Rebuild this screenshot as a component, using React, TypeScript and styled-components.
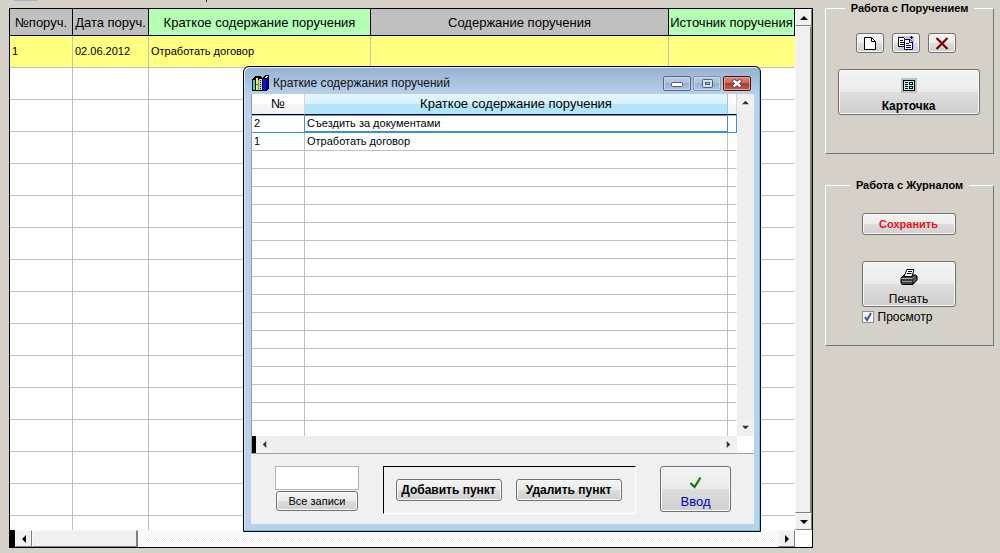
import React from 'react';
import styled, { createGlobalStyle, css } from 'styled-components';

const GlobalStyle = createGlobalStyle`
  * { box-sizing: border-box; }
  body {
    margin: 0;
    background: #d5d1c8;
    color: #000;
    font-family: "Liberation Sans", Arial, sans-serif;
    font-size: 11px;
  }
  button, input { font-family: inherit; }
`;

const Page = styled.div`
  position: relative;
  display: flex;
  gap: 12px;
  height: 100vh;
  min-height: 540px;
  padding: 0 6px 5px 9px;
  overflow: hidden;
`;

/* ---------- journal ---------- */

const JournalColumn = styled.main`
  flex: 1;
  min-width: 0;
  display: flex;
  flex-direction: column;
`;

const ToolStrip = styled.div`
  display: flex;
  gap: 168px;
  height: 8px;
  flex: none;
  padding-left: 5px;
`;

const ToolEdge = styled.div`
  width: 24px;
  height: 1px;
  background: #a3b4c8;
`;

const ToolMark = styled.div`
  width: 1px;
  height: 2px;
  background: #222;
`;

const Journal = styled.section`
  flex: 1;
  min-height: 0;
  display: flex;
  flex-direction: column;
  border: 1px solid #000;
  background: #fff;
`;

const JournalBody = styled.div`
  flex: 1;
  min-height: 0;
  display: flex;
`;

const TableClip = styled.div`
  flex: 1;
  min-width: 0;
  overflow: hidden;
`;

const JournalTable = styled.table`
  width: 100%;
  table-layout: fixed;
  border-collapse: separate;
  border-spacing: 0;
`;

const JournalHead = styled.th<{ $green?: boolean }>`
  height: 27px;
  padding: 2px 0 0;
  border-right: 1px solid #000;
  border-bottom: 1px solid #000;
  background: ${(p) => (p.$green ? '#b3ffb3' : '#c0c0c0')};
  font-size: 13px;
  font-weight: 400;
  line-height: 16px;
  text-align: center;
  white-space: nowrap;
`;

const JournalRow = styled.tr<{ $selected?: boolean }>`
  background: ${(p) => (p.$selected ? '#ffff80' : '#fff')};
`;

const JournalCell = styled.td`
  height: 32px;
  padding: 0 2px 2px;
  border-right: 1px solid #c0c0c0;
  border-bottom: 1px solid #c0c0c0;
  font-size: 11px;
  line-height: 14px;
  white-space: nowrap;
  &:last-child { border-right-color: transparent; }
`;

/* ---------- scroll bars ---------- */

const raised = css`
  border: 1px solid;
  border-color: #f8f8f8 #808080 #808080 #f8f8f8;
  background: #f0f0f0;
`;

const VScroll = styled.div`
  width: 17px;
  flex: none;
  display: flex;
  flex-direction: column;
`;

const HScroll = styled.div`
  height: 17px;
  flex: none;
  display: flex;
  background: #fff;
`;

const ScrollButton = styled.button`
  ${raised}
  width: 17px;
  height: 17px;
  flex: none;
  padding: 0;
  display: flex;
  align-items: center;
  justify-content: center;
`;

const Thumb = styled.div<{ $width?: number }>`
  ${raised}
  border-right-width: 2px;
  flex: ${(p) => (p.$width ? `0 0 ${p.$width}px` : 1)};
`;

const Track = styled.div`
  flex: 1;
  background: repeating-conic-gradient(#f1f1f1 0 25%, #fff 0 50%) 0 0 / 2px 2px;
`;

const Split = styled.div<{ $width: number }>`
  width: ${(p) => p.$width}px;
  flex: none;
  background: #000;
`;

const Corner = styled.div<{ $size: number }>`
  width: ${(p) => p.$size}px;
  flex: none;
  background: #fff;
`;

const arrowPaths = {
  up: 'M0 6L4 2L8 6Z',
  down: 'M0 2L4 6L8 2Z',
  left: 'M6 0L2 4L6 8Z',
  right: 'M2 0L6 4L2 8Z',
};

const Arrow = ({ dir, size = 8 }: { dir: keyof typeof arrowPaths; size?: number }) => (
  <svg width={size} height={size} viewBox="0 0 8 8" aria-hidden="true">
    <path d={arrowPaths[dir]} fill={size < 8 ? '#333' : '#000'} />
  </svg>
);

/* ---------- side panel ---------- */

const Side = styled.aside`
  width: 169px;
  flex: none;
  display: flex;
  flex-direction: column;
  gap: 23px;
`;

const Group = styled.fieldset<{ $height: number }>`
  min-width: 0;
  min-height: ${(p) => p.$height}px;
  margin: 0;
  padding: 0;
  border: 1px solid;
  border-color: #fff #77746e #77746e #fff;
`;

const Legend = styled.legend`
  margin: 0 auto;
  padding: 0 6px;
  font-size: 11px;
  font-weight: 700;
  line-height: 16px;
`;

const GroupBody = styled.div<{ $top: number }>`
  display: flex;
  flex-direction: column;
  align-items: center;
  padding-top: ${(p) => p.$top}px;
  padding-right: 2px;
`;

const IconRow = styled.div`
  display: flex;
  gap: 8px;
  margin-bottom: 16px;
  margin-right: 6px;
`;

type ButtonProps = { $w: number; $h: number; $size?: number; $bold?: boolean; $color?: string };

const Button = styled.button<ButtonProps>`
  width: ${(p) => p.$w}px;
  height: ${(p) => p.$h}px;
  flex: none;
  display: flex;
  flex-direction: column;
  align-items: center;
  justify-content: center;
  gap: 6px;
  padding: ${(p) => (p.$h > 40 ? '6px 0 0' : '0')};
  border: 1px solid #707070;
  border-radius: 3px;
  box-shadow: inset 0 0 0 1px #fafafa;
  background: linear-gradient(#f3f3f3, #ebebeb 49%, #dddddd 50%, #cfcfcf);
  color: ${(p) => p.$color ?? '#000'};
  font-size: ${(p) => p.$size ?? 11}px;
  font-weight: ${(p) => (p.$bold ? 700 : 400)};
  line-height: 14px;
  white-space: nowrap;
`;

const PrintBlock = styled.div`
  display: flex;
  flex-direction: column;
  gap: 3px;
  margin-top: 26px;
`;

const CheckLabel = styled.label`
  display: flex;
  align-items: center;
  gap: 4px;
  font-size: 12px;
  line-height: 14px;
`;

const CheckBox = styled.input`
  appearance: none;
  width: 12px;
  height: 12px;
  margin: 0;
  border: 1px solid #8e8f8f;
  background: #f4f6fa;
  &:checked {
    background: #f4f6fa
      url("data:image/svg+xml,%3Csvg xmlns='http://www.w3.org/2000/svg' viewBox='0 0 10 10'%3E%3Cpath d='M2 5L4 8L8 1' fill='none' stroke='%233c5a9c' stroke-width='2'/%3E%3C/svg%3E")
      center / 10px 10px no-repeat;
  }
`;

/* ---------- dialog window ---------- */

const Window = styled.section`
  position: absolute;
  left: 243px;
  top: 66px;
  width: 518px;
  padding: 0 6px 7px 7px;
  border: 1px solid #000;
  border-radius: 6px 6px 0 0;
  box-shadow: inset -1px -1px 0 #49cdea, inset 1px 1px 0 #dfeaf6;
  background: linear-gradient(#96b1d0, #b9d1ea 28px, #b9d1ea);
`;

const TitleBar = styled.header`
  display: flex;
  align-items: center;
  height: 27px;
  padding: 5px 3px 0 1px;
`;

const Title = styled.h1`
  flex: 1;
  margin: 0 0 0 4px;
  font-size: 12px;
  font-weight: 400;
  line-height: 16px;
  color: #111;
`;

const Caption = styled.div`
  display: flex;
  gap: 2px;
`;

const CaptionButton = styled.button<{ $kind?: 'close' | 'dim' }>`
  width: 28px;
  height: 15px;
  padding: 0;
  display: flex;
  align-items: center;
  justify-content: center;
  border: 1px solid ${(p) => (p.$kind === 'close' ? '#4c1610' : p.$kind === 'dim' ? '#8095b0' : '#566883')};
  border-radius: 2px;
  box-shadow: inset 0 0 0 1px ${(p) => (p.$kind === 'close' ? '#e0a298' : '#c6d8ec')};
  background: ${(p) =>
    p.$kind === 'close'
      ? 'linear-gradient(#d98b80, #c9655a 49%, #b2392c 50%, #c4604c)'
      : 'linear-gradient(#b9cde3, #adc3dc 49%, #98b2cf 50%, #abc3dd)'};
`;

const Client = styled.div`
  background: #f0f0f0;
`;

const ListFrame = styled.div`
  border-bottom: 1px solid #a0a0a0;
  border-left: 1px solid #a0a0a0;
  background: #fff;
`;

const ListBody = styled.div`
  display: flex;
  height: 342px;
`;

const ListTable = styled.table`
  width: 100%;
  table-layout: fixed;
  border-collapse: separate;
  border-spacing: 0;
`;

const ListHead = styled.th<{ $active?: boolean }>`
  height: 21px;
  padding: 0;
  border-bottom: 1px solid #000;
  border-right: 1px solid ${(p) => (p.$active ? '#8ccbe4' : '#d5d5d5')};
  background: ${(p) =>
    p.$active
      ? 'linear-gradient(#e6f6fd, #d8f1fc 49%, #b4e4f8 50%, #b0e6fb)'
      : 'linear-gradient(#fff, #fdfdfd 49%, #f5f5f6 50%, #f1f1f2)'};
  font-size: 13px;
  font-weight: 400;
  line-height: 16px;
  white-space: nowrap;
`;

const ListCell = styled.td<{ $selected?: boolean }>`
  height: 18px;
  padding: 0 2px 1px;
  border-right: 1px solid #c0c0c0;
  border-bottom: 1px solid #c0c0c0;
  font-size: 11px;
  line-height: 14px;
  white-space: nowrap;
  &:last-child { border-right-color: transparent; }
  ${(p) =>
    p.$selected &&
    css`
      border-color: #3d8fe0;
      box-shadow: inset 0 1px 0 #8cc3f5;
      &:nth-child(2) { box-shadow: inset 0 1px 0 #3d8fe0, inset 0 -1px 0 #3d8fe0; }
      &:last-child { border-right-color: #3d8fe0; }
    `}
`;

const SoftScroll = styled.div<{ $vertical?: boolean }>`
  display: flex;
  flex: ${(p) => (p.$vertical ? 'none' : 1)};
  flex-direction: ${(p) => (p.$vertical ? 'column' : 'row')};
  justify-content: space-between;
  ${(p) => p.$vertical && 'width: 17px;'}
  background: #eeeeee;
`;

const SoftButton = styled.button`
  width: 17px;
  height: 17px;
  padding: 0;
  border: 0;
  display: flex;
  align-items: center;
  justify-content: center;
  background: #f1f1f1;
`;

const ListScrollRow = styled.div`
  display: flex;
  height: 17px;
`;

const Footer = styled.footer`
  display: flex;
  align-items: flex-start;
  gap: 24px;
  padding: 12px 23px 10px 24px;
`;

const Finder = styled.div`
  display: flex;
  flex-direction: column;
  align-items: center;
  gap: 1px;
`;

const FinderInput = styled.input`
  width: 84px;
  height: 24px;
  padding: 0 4px;
  border: 1px solid #b4b4b4;
  background: #fff;
`;

const ActionPanel = styled.div`
  flex: 1;
  display: flex;
  align-items: center;
  justify-content: center;
  gap: 14px;
  height: 48px;
  padding-right: 2px;
  border: 1px solid;
  border-color: #000 #fff #fff #000;
`;

/* ---------- icons ---------- */

const BooksIcon = () => (
  <svg width="17" height="17" viewBox="0 0 17 17" shapeRendering="crispEdges" aria-hidden="true">
    <path d="M0 4L3 1H8L10 3V16H0Z" fill="#000" />
    <path d="M1 5H3V15H1Z" fill="#28dcdc" />
    <path d="M3 3H4V15H3Z" fill="#000" />
    <path d="M4 3H6V15H4Z" fill="#f0ec60" />
    <path d="M6 5H7V15H6Z" fill="#38b848" />
    <path d="M7 4H10V15H7Z" fill="#d8d8c8" />
    <path d="M8 5.5H9M8 7.5H9M8 9.5H9M8 11.5H9M8 13.5H9" stroke="#000" />
    <path d="M4 9.5H6" stroke="#806020" />
    <path d="M10 3L14 0H17V13L14 16H10Z" fill="#000" />
    <path d="M11 4H14V15H11Z" fill="#1010e0" />
    <path d="M14 4L16 2V12L14 14Z" fill="#0000a0" />
    <path d="M12 3L14 1H16L14 3Z" fill="#fff" />
  </svg>
);

const PageIcon = () => (
  <svg width="12" height="13" viewBox="0 0 12 13" aria-hidden="true">
    <path d="M.5 .5H7.5L11.5 4.5V12.5H.5Z" fill="#fff" stroke="#000" />
    <path d="M7.5 .5V4.5H11.5" fill="none" stroke="#000" />
  </svg>
);

const CopyIcon = () => (
  <svg width="16" height="14" viewBox="0 0 16 14" aria-hidden="true">
    <rect width="16" height="14" fill="#c8c8cc" />
    <path d="M.5 1.5H5.5L7.5 3.5V10.5H.5Z" fill="#fff" stroke="#000" />
    <path d="M2 4.5H5M2 6.5H6M2 8.5H6" stroke="#000" />
    <path d="M6.5 3.5H12L14.5 6V13.5H6.5Z" fill="#fff" stroke="#000080" />
    <path d="M11.5 4V6.5H14M8 7.5H11M8 9.5H13M8 11.5H13" fill="none" stroke="#000080" />
    <path d="M12 1.5H15M13.5 0V3" stroke="#000080" />
  </svg>
);

const DeleteIcon = () => (
  <svg width="14" height="13" viewBox="0 0 14 13" aria-hidden="true">
    <path d="M1.5 1L12.500 12M12.500 1L1.500 12" fill="none" stroke="#800000" strokeWidth="2.200" />
  </svg>
);

const CardIcon = () => (
  <svg width="16" height="15" viewBox="0 0 16 15" shapeRendering="crispEdges" aria-hidden="true">
    <rect width="16" height="15" fill="#c0c0c0" />
    <rect x="2" y="2" width="12" height="11" fill="#000" />
    <rect x="3" y="3" width="10" height="9" fill="#a4f4f0" />
    <path d="M4 4.5H7M4 6.5H7M4 8.5H7M4 10.5H7" stroke="#000" />
    <path d="M8 4H12V7H8ZM8 8H12V11H8Z" fill="#000" />
    <path d="M9 5.5H11M9 9.5H11" stroke="#a4f4f0" />
  </svg>
);

const PrinterIcon = () => (
  <svg width="18" height="17" viewBox="0 0 18 17" aria-hidden="true">
    <path d="M1 9L4 6H16L17 7V11L13 15.5H2L1 14Z" fill="#404040" stroke="#000" />
    <path d="M4 7.5L7 .5H14L12 7.5Z" fill="#fff" stroke="#000" />
    <path d="M8 2.5H12M7 4.5H11.5" stroke="#000" />
    <path d="M1.5 9.5H12.5L16.5 6.5" fill="none" stroke="#a8a8a8" />
    <path d="M2 12.5H12" stroke="#909090" />
    <path d="M13 10V15L16.5 11V7Z" fill="#666" stroke="#000" strokeWidth=".6" />
  </svg>
);

const CheckIcon = () => (
  <svg width="13" height="13" viewBox="0 0 13 13" aria-hidden="true">
    <path d="M1.5 7L5.500 11L11.500 1.500" fill="none" stroke="#0a7a14" strokeWidth="2.200" />
  </svg>
);

const MinimizeGlyph = () => (
  <svg width="12" height="9" viewBox="0 0 12 9" aria-hidden="true">
    <rect x=".5" y="3.500" width="11" height="4" rx="1" fill="#fff" stroke="#4f5e74" />
  </svg>
);

const MaximizeGlyph = () => (
  <svg width="11" height="9" viewBox="0 0 11 9" aria-hidden="true">
    <rect x=".5" y=".5" width="10" height="8" rx="1" fill="#d4e0ed" stroke="#4f5e74" />
    <rect x="3.500" y="3.500" width="4" height="2" fill="#a9bed6" stroke="#4f5e74" />
  </svg>
);

const CloseGlyph = () => (
  <svg width="12" height="9" viewBox="0 0 12 9" aria-hidden="true">
    <path d="M2 1L10 8M10 1L2 8" stroke="#4d3b42" strokeWidth="4" />
    <path d="M2.500 1.500L9.500 7.500M9.500 1.500L2.500 7.500" stroke="#fff" strokeWidth="2.400" />
  </svg>
);

/* ---------- data ---------- */

const journalColumns = [
  { title: '№поруч.', width: 63 },
  { title: 'Дата поруч.', width: 76 },
  { title: 'Краткое содержание поручения', width: 222, green: true },
  { title: 'Содержание поручения' },
  { title: 'Источник поручения', width: 126, green: true },
];

const journalRows = [['1', '02.06.2012', 'Отработать договор', '', '']];
const emptyJournalRows = Array.from({ length: 15 }, () => ['', '', '', '', '']);

const listRows = [
  ['2', 'Съездить за документами'],
  ['1', 'Отработать договор'],
];
const emptyListRows = Array.from({ length: 16 }, () => ['', '']);

export default function App() {
  return (
    <Page>
      <GlobalStyle />
      <JournalColumn>
        <ToolStrip>
          <ToolEdge />
          <ToolMark />
        </ToolStrip>
        <Journal>
          <JournalBody>
            <TableClip>
              <JournalTable>
                <colgroup>
                  {journalColumns.map((c) => (
                    <col key={c.title} width={c.width} />
                  ))}
                </colgroup>
                <thead>
                  <tr>
                    {journalColumns.map((c) => (
                      <JournalHead key={c.title} $green={c.green}>{c.title}</JournalHead>
                    ))}
                  </tr>
                </thead>
                <tbody>
                  {[...journalRows, ...emptyJournalRows].map((row, r) => (
                    <JournalRow key={r} $selected={r === 0}>
                      {row.map((text, c) => (
                        <JournalCell key={c}>{text}</JournalCell>
                      ))}
                    </JournalRow>
                  ))}
                </tbody>
              </JournalTable>
            </TableClip>
            <VScroll>
              <ScrollButton aria-label="Вверх"><Arrow dir="up" /></ScrollButton>
              <Thumb />
              <ScrollButton aria-label="Вниз"><Arrow dir="down" /></ScrollButton>
            </VScroll>
          </JournalBody>
          <HScroll>
            <Split $width={5} />
            <ScrollButton aria-label="Влево"><Arrow dir="left" /></ScrollButton>
            <Thumb $width={106} />
            <Track />
            <ScrollButton aria-label="Вправо"><Arrow dir="right" /></ScrollButton>
            <Corner $size={17} />
          </HScroll>
        </Journal>
      </JournalColumn>

      <Side>
        <Group $height={154}>
          <Legend>Работа с Поручением</Legend>
          <GroupBody $top={17}>
            <IconRow>
              <Button $w={28} $h={20} aria-label="Новое"><PageIcon /></Button>
              <Button $w={28} $h={20} aria-label="Копировать"><CopyIcon /></Button>
              <Button $w={28} $h={20} aria-label="Удалить"><DeleteIcon /></Button>
            </IconRow>
            <Button $w={142} $h={46} $size={12} $bold>
              <CardIcon />
              Карточка
            </Button>
          </GroupBody>
        </Group>
        <Group $height={169}>
          <Legend>Работа с Журналом</Legend>
          <GroupBody $top={20}>
            <Button $w={94} $h={22} $bold $color="#ee1020">Сохранить</Button>
            <PrintBlock>
              <Button $w={94} $h={46} $size={12}>
                <PrinterIcon />
                Печать
              </Button>
              <CheckLabel>
                <CheckBox type="checkbox" defaultChecked />
                Просмотр
              </CheckLabel>
            </PrintBlock>
          </GroupBody>
        </Group>
      </Side>

      <Window role="dialog" aria-labelledby="window-title">
        <TitleBar>
          <BooksIcon />
          <Title id="window-title">Краткие содержания поручений</Title>
          <Caption>
            <CaptionButton aria-label="Свернуть"><MinimizeGlyph /></CaptionButton>
            <CaptionButton $kind="dim" aria-label="Развернуть"><MaximizeGlyph /></CaptionButton>
            <CaptionButton $kind="close" aria-label="Закрыть"><CloseGlyph /></CaptionButton>
          </Caption>
        </TitleBar>
        <Client>
          <ListFrame>
            <ListBody>
              <TableClip>
                <ListTable>
                  <colgroup>
                    <col width={53} />
                    <col />
                    <col width={9} />
                  </colgroup>
                  <thead>
                    <tr>
                      <ListHead>№</ListHead>
                      <ListHead $active>Краткое содержание поручения</ListHead>
                      <ListHead as="td" />
                    </tr>
                  </thead>
                  <tbody>
                    {[...listRows, ...emptyListRows].map(([no, text], r) => (
                      <tr key={r}>
                        <ListCell $selected={r === 0}>{no}</ListCell>
                        <ListCell $selected={r === 0}>{text}</ListCell>
                        <ListCell $selected={r === 0} />
                      </tr>
                    ))}
                  </tbody>
                </ListTable>
              </TableClip>
              <SoftScroll $vertical>
                <SoftButton aria-label="Вверх"><Arrow dir="up" size={7} /></SoftButton>
                <SoftButton aria-label="Вниз"><Arrow dir="down" size={7} /></SoftButton>
              </SoftScroll>
            </ListBody>
            <ListScrollRow>
              <Split $width={4} />
              <SoftScroll>
                <SoftButton aria-label="Влево"><Arrow dir="left" size={7} /></SoftButton>
                <SoftButton aria-label="Вправо"><Arrow dir="right" size={7} /></SoftButton>
              </SoftScroll>
              <Corner $size={17} />
            </ListScrollRow>
          </ListFrame>
          <Footer>
            <Finder>
              <FinderInput aria-label="Поиск" />
              <Button $w={82} $h={20}>Все записи</Button>
            </Finder>
            <ActionPanel>
              <Button $w={106} $h={22} $size={12} $bold>Добавить пункт</Button>
              <Button $w={106} $h={22} $size={12} $bold>Удалить пункт</Button>
            </ActionPanel>
            <Button $w={71} $h={46} $size={13} $color="#0000c8">
              <CheckIcon />
              Ввод
            </Button>
          </Footer>
        </Client>
      </Window>
    </Page>
  );
}
